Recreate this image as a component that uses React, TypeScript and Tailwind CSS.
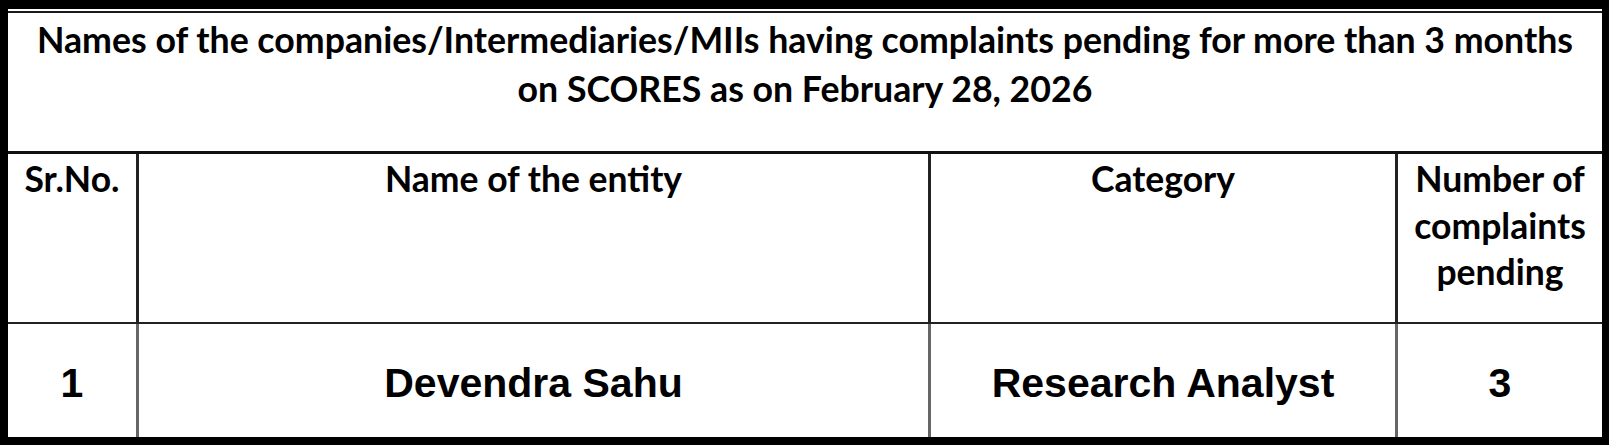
export default function App() {
  const cal = { fontFamily: "Lato, 'Open Sans', sans-serif" };
  return (
    <div className="w-[1609px] h-[445px] bg-black pt-[9px] pl-[8px] pr-[7px] pb-[8px]">
      <div className="w-[1594px] h-[428px] bg-white pt-[2px] flex flex-col text-black">
        <div className="border-t-2 border-[#1a1a1a] h-[140px] pt-[2px] text-center font-bold text-[35.7px] leading-[49px]" style={cal}>
          <div>Names of the companies/Intermediaries/MIIs having complaints pending for more than 3 months</div>
          <div>on SCORES as on February 28, 2026</div>
        </div>
        <div className="border-t-[3px] border-[#111] h-[171px] grid grid-cols-[128px_792px_467px_207px] font-bold text-[35.5px] leading-[46.5px] text-center" style={cal}>
          <div className="pt-[2px]">Sr.No.</div>
          <div className="pt-[2px] border-l-[3px] border-[#222]">Name of the entity</div>
          <div className="pt-[2px] border-l-[3px] border-[#222]">Category</div>
          <div className="pt-[2px] border-l-[3px] border-[#222] whitespace-nowrap">Number of<br />complaints<br />pending</div>
        </div>
        <div className="border-t-2 border-[#222] flex-1 grid grid-cols-[128px_792px_467px_207px] font-bold text-[41px] text-center" style={{ fontFamily: "'Liberation Sans', Arial, sans-serif" }}>
          <div className="flex items-center justify-center pt-[6px]">1</div>
          <div className="flex items-center justify-center pt-[6px] border-l-[3px] border-[#666]">Devendra Sahu</div>
          <div className="flex items-center justify-center pt-[6px] border-l-[3px] border-[#666]">Research Analyst</div>
          <div className="flex items-center justify-center pt-[6px] border-l-[3px] border-[#666]">3</div>
        </div>
      </div>
    </div>
  );
}
